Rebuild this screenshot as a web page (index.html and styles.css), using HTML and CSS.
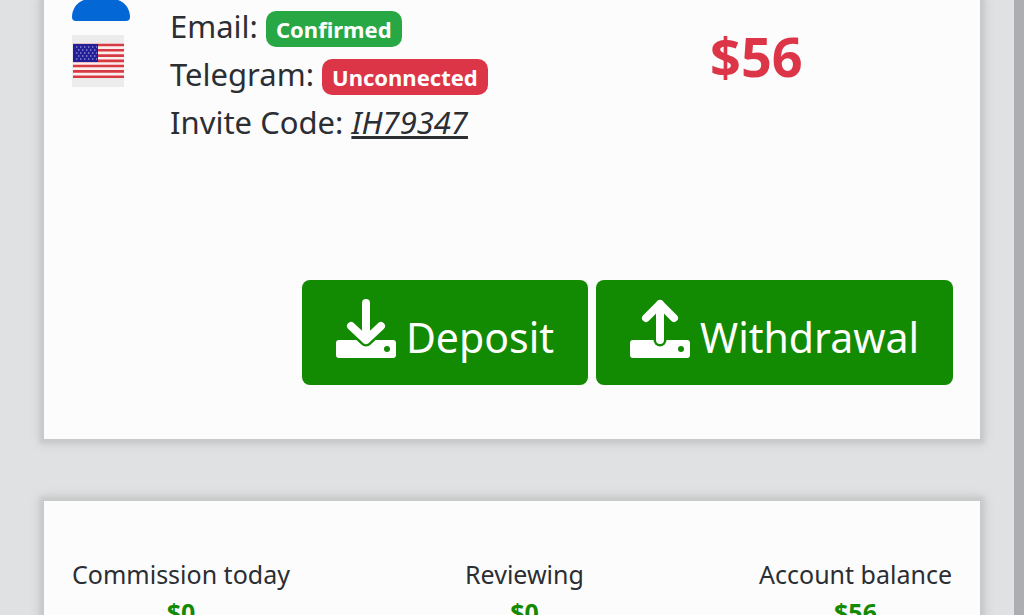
FILE: index.html
```html
<!DOCTYPE html>
<html lang="en">
<head>
    <meta charset="UTF-8">
    <meta name="viewport" content="width=device-width, initial-scale=1.0">
    <title>Account</title>
    <link rel="stylesheet" href="styles.css">
</head>
<body>
    <main class="content">
        <section class="card profile-card">
            <div class="profile">
                <div class="avatar-column">
                    <svg class="avatar" viewBox="0 0 58 22" aria-hidden="true">
                        <path d="M0 17C0 9 5 2 12 0H46C53 2 58 9 58 17Q58 21 54 21H4Q0 21 0 17Z" fill="#0467d6"/>
                    </svg>
                    <svg class="flag" viewBox="0 0 52 52" role="img" aria-label="United States">
                        <rect width="52" height="52" fill="#ececec"/>
                        <rect x="1" y="9" width="51" height="34" fill="#fbeeee"/>
                        <path d="M1 10H52M1 15.3H52M1 20.6H52M1 25.9H52M1 31H52M1 36.4H52M1 41.7H52" stroke="#d83a43" stroke-width="2.6"/>
                        <rect x="1" y="9" width="25" height="18" fill="#24209a"/>
                        <path d="M4 12H25M6 15H25M4 18H25M6 21H25M4 24H25" stroke="#8d8bd2" stroke-width="1.4" stroke-dasharray="1.4 2.6"/>
                    </svg>
                </div>
                <div class="details">
                    <div>Email: <span class="badge badge-success">Confirmed</span></div>
                    <div>Telegram: <span class="badge badge-danger">Unconnected</span></div>
                    <div>Invite Code: <em class="invite-code">IH79347</em></div>
                </div>
                <div class="amount">$56</div>
            </div>
            <div class="actions">
                <button type="button" class="btn">
                    <svg class="btn-icon" viewBox="0 0 60 60" aria-hidden="true">
                        <rect y="41" width="60" height="18" rx="3" fill="#fff"/>
                        <circle cx="51" cy="50" r="3" fill="#128a02"/>
                        <path d="M30 4V41M15 27L30 41L45 27" fill="none" stroke="#128a02" stroke-width="13" stroke-linecap="round" stroke-linejoin="round"/>
                        <path d="M30 4V41M15 27L30 41L45 27" fill="none" stroke="#fff" stroke-width="8" stroke-linecap="round" stroke-linejoin="round"/>
                    </svg>
                    Deposit
                </button>
                <button type="button" class="btn">
                    <svg class="btn-icon" viewBox="0 0 60 60" aria-hidden="true">
                        <rect y="41" width="60" height="18" rx="3" fill="#fff"/>
                        <circle cx="51" cy="50" r="3" fill="#128a02"/>
                        <path d="M30 5V41" stroke="#128a02" stroke-width="13" stroke-linecap="round"/>
                        <path d="M30 5V41M16 19L30 5L44 19" fill="none" stroke="#fff" stroke-width="8" stroke-linecap="round" stroke-linejoin="round"/>
                    </svg>
                    Withdrawal
                </button>
            </div>
        </section>

        <section class="card stats">
            <div class="stat">
                <div>Commission today</div>
                <div class="stat-value">$0</div>
            </div>
            <div class="stat">
                <div>Reviewing</div>
                <div class="stat-value">$0</div>
            </div>
            <div class="stat">
                <div>Account balance</div>
                <div class="stat-value">$56</div>
            </div>
        </section>
    </main>
</body>
</html>
```
FILE: styles.css
```css
:root {
    --background-color: #e0e1e3;
    --card-background: #fcfcfc;
    --text-color: #2b2e33;
    --green: #128a02;
    --success: #28a745;
    --danger: #dc3548;
}

* {
    box-sizing: border-box;
}

html {
    height: 100%;
    overflow: hidden;
}

body {
    margin: 0;
    min-height: 100%;
    font-family: 'Noto Sans', sans-serif;
    color: var(--text-color);
    background-color: var(--background-color);
    border-right: 10px solid #adaeb1;
}

.content {
    display: flex;
    flex-direction: column;
    gap: 62px;
    padding: 0 34px 0 44px;
}

.card {
    background-color: var(--card-background);
    box-shadow: 0 0 4px 4px #c8c9ca, 0 0 12px 4px rgba(0, 0, 0, 0.1);
}

.profile-card {
    padding: 0 27px 54px 28px;
}

.profile {
    display: grid;
    grid-template-columns: 98px 1fr 243px;
    padding-bottom: 134px;
}

.avatar-column {
    display: flex;
    flex-direction: column;
    gap: 13px;
}

.avatar {
    width: 58px;
    height: 22px;
}

.flag {
    width: 52px;
    height: 52px;
}

.details {
    padding-top: 2px;
    font-size: 31px;
    line-height: 48px;
}

.badge {
    display: inline-block;
    padding: 0 10px;
    border-radius: 10px;
    color: white;
    font-size: 22px;
    font-weight: 700;
    line-height: 36px;
}

.badge-success {
    background-color: var(--success);
}

.badge-danger {
    background-color: var(--danger);
}

.invite-code {
    text-decoration: underline;
}

.amount {
    padding-top: 22px;
    color: var(--danger);
    font-size: 54px;
    font-weight: 700;
    line-height: 68px;
}

.actions {
    display: flex;
    justify-content: flex-end;
    gap: 8px;
}

.btn {
    display: flex;
    align-items: center;
    gap: 10px;
    padding: 19px 34px 10px;
    border: none;
    border-radius: 8px;
    background-color: var(--green);
    color: white;
    font-family: inherit;
    font-size: 41px;
    line-height: 76px;
    cursor: pointer;
}

.btn-icon {
    width: 60px;
    height: 60px;
    margin-bottom: 16px;
}

.stats {
    display: flex;
    justify-content: space-between;
    padding: 54px 28px;
    font-size: 25px;
    line-height: 38px;
    text-align: center;
}

.stat-value {
    color: var(--green);
    font-weight: 700;
}
```
